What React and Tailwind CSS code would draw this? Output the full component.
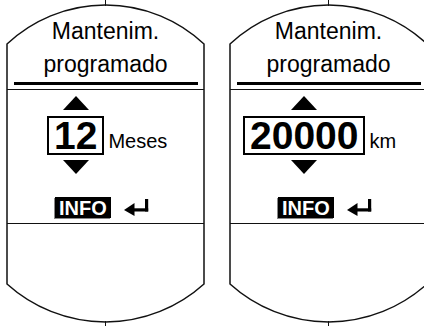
import React from "react";

const font = { fontFamily: '"Liberation Sans", Arial, sans-serif' };

function Outline() {
  return (
    <svg
      className="absolute left-0 top-0 pointer-events-none"
      width="199"
      height="326"
      viewBox="0 0 199 326"
      fill="none"
    >
      <path
        d="M1 44 A144 144 0 0 1 198 44 L198 284 A147 147 0 0 1 1 284 Z"
        stroke="#111"
        strokeWidth="1.5"
      />
      <line x1="99.5" y1="0" x2="99.5" y2="6" stroke="#111" strokeWidth="1" />
      <line x1="99.5" y1="321" x2="99.5" y2="326" stroke="#111" strokeWidth="1" />
    </svg>
  );
}

function Tri({ down }) {
  return (
    <svg width="26" height="14" viewBox="0 0 26 14" className="block">
      {down ? (
        <polygon points="0,0 26,0 13,14" fill="#000" />
      ) : (
        <polygon points="13,0 26,14 0,14" fill="#000" />
      )}
    </svg>
  );
}

function Enter() {
  return (
    <svg width="26" height="17" viewBox="0 0 26 17" className="block">
      <rect x="21" y="0" width="3.2" height="12.5" fill="#000" />
      <rect x="8" y="9.3" width="16.2" height="3.2" fill="#000" />
      <polygon points="0,10.9 10.5,4 10.5,17" fill="#000" />
    </svg>
  );
}

function Panel({ value, unit, rowPl }) {
  return (
    <div className="relative w-[199px] h-[326px] shrink-0" style={font}>
      <Outline />
      <div className="relative flex flex-col pt-[15px] text-black">
        <div className="text-center text-[23px] leading-[33px]">
          <div>Mantenim.</div>
          <div>programado</div>
        </div>
        <div className="mt-[1px] ml-[8px] mr-[7px] h-[3px] bg-black" />
        <div className="mt-[4px] mx-[1px] h-px bg-[#111]" />
        <div className={`flex items-end gap-[4px] ${rowPl}`}>
          <div className="flex flex-col items-center">
            <div className="mt-[6px]">
              <Tri />
            </div>
            <div className="mt-[6px] h-[39px] border-2 border-black px-[5px] flex items-center justify-center text-[39px] font-bold leading-none">
              {value}
            </div>
            <div className="mt-[5px]">
              <Tri down />
            </div>
          </div>
          <div className="mb-[23px] text-[20px] leading-none">{unit}</div>
        </div>
        <div className="mt-[23px] pl-[49px] flex items-center gap-[13px]">
          <div className="h-[21px] bg-black text-white font-bold text-[20px] leading-none px-[4px] flex items-center shadow-[-1px_1px_0_#888]">
            INFO
          </div>
          <Enter />
        </div>
        <div className="mt-[5px] mx-[1px] h-px bg-[#111]" />
      </div>
    </div>
  );
}

export default function App() {
  return (
    <div className="w-[424px] h-[326px] overflow-hidden bg-white flex pl-[6px] gap-[24px]">
      <Panel value="12" unit="Meses" rowPl="pl-[41px]" />
      <Panel value="20000" unit="km" rowPl="pl-[14px]" />
    </div>
  );
}
